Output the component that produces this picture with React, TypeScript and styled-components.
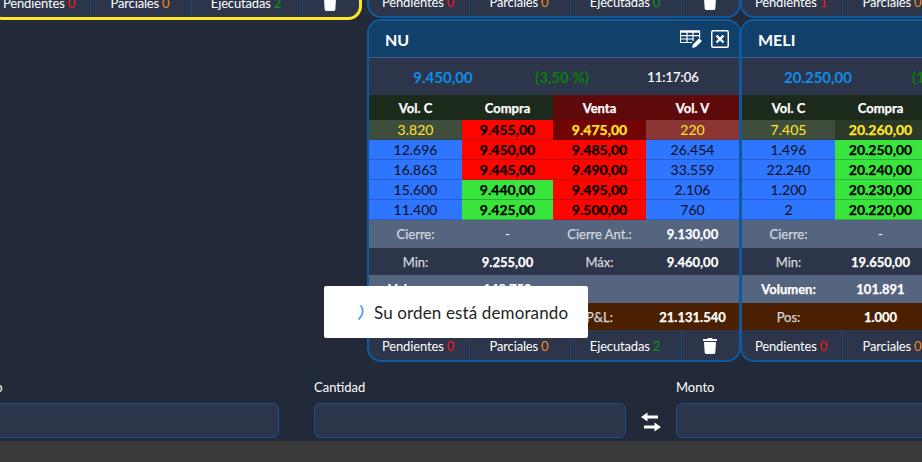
import React from "react";
import styled, { createGlobalStyle } from "styled-components";
import { FaTrash } from "react-icons/fa";

const Global = createGlobalStyle`
  html, body { margin: 0; padding: 0; background: #222938; overflow: hidden; }
  * { box-sizing: border-box; }
`;

const Page = styled.div`
  position: relative;
  width: 922px;
  height: 462px;
  overflow: hidden;
  background: #222938;
  color: #fff;
  font-family: Lato, "Open Sans", sans-serif;
  font-size: 13px;
  display: flex;
  flex-direction: column;
`;

const Board = styled.div`
  margin: -20px 0 0 -12px;
  height: 382px;
  flex: none;
`;

const TopRow = styled.div`
  display: flex;
  height: 38px;
  margin-bottom: 1px;
  align-items: flex-start;
`;

const MainRow = styled.div`
  display: flex;
  padding-left: 379px;
`;

const Card = styled.section<{ $active?: boolean; $strip?: boolean; $joined?: boolean }>`
  flex: none;
  width: 374px;
  margin-right: ${(p) => (p.$active ? "5px" : "0")};
  margin-left: ${(p) => (p.$joined ? "-1px" : "0")};
  border: ${(p) => (p.$active ? "3px solid #ffe629" : "2px solid #0f5a9e")};
  border-left-width: 2px;
  border-right-width: ${(p) => (p.$active ? "3px" : "2px")};
  border-radius: ${(p) => (p.$strip ? "0 0 14px 14px" : "14px")};
  background: #2c3549;
  overflow: hidden;
  display: flex;
  flex-direction: column;
  ${(p) => p.$strip && "height: " + (p.$active ? "40px" : "38px") + "; justify-content: flex-end; border-top: 0;"}
`;

const Header = styled.header`
  height: 37px;
  flex: none;
  background: #11406a;
  border-bottom: 1px solid #3c5f86;
  display: flex;
  align-items: center;
  justify-content: space-between;
  padding: 0 10px 0 16px;
  font-size: 16px;
  font-weight: 700;
`;

const HeaderIcons = styled.div`
  display: flex;
  align-items: center;
  gap: 9px;
`;

const Info = styled.div<{ $wide?: boolean }>`
  height: 37px;
  flex: none;
  display: grid;
  grid-template-columns: ${(p) => (p.$wide ? "152px 90px 1fr" : "148px 90px 1fr")};
  align-items: center;
  text-align: center;
  white-space: nowrap;
`;

const Price = styled.span`
  color: #0f8ee9;
  font-size: 15px;
  font-weight: 700;
`;

const Change = styled.span`
  color: #0b7d0b;
  font-size: 15px;
  font-weight: 700;
`;

const Clock = styled.span`
  font-size: 13px;
  -webkit-text-stroke: 0.2px #fff;
`;

const Grid4 = styled.div<{ $bg?: string; $h: number }>`
  display: grid;
  grid-template-columns: 93px 91px 93px 93px;
  height: ${(p) => p.$h}px;
  flex: none;
  background: ${(p) => p.$bg || "transparent"};
`;

const Cell = styled.div<{ $bg?: string; $color?: string; $bold?: boolean; $line?: boolean; $dim?: boolean }>`
  display: flex;
  align-items: center;
  justify-content: center;
  white-space: nowrap;
  background: ${(p) => p.$bg || "transparent"};
  color: ${(p) => p.$color || (p.$dim ? "#d3d7de" : "#fff")};
  font-weight: ${(p) => (p.$bold ? 700 : 400)};
  font-size: ${(p) => (p.$line ? "14px" : "13px")};
  ${(p) => p.$bold && "-webkit-text-stroke: 0.25px currentColor;"}
  ${(p) => p.$dim && "-webkit-text-stroke: 0.25px currentColor;"}
  ${(p) => p.$line && "border-bottom: 1px solid rgba(20,40,90,.28);"}
`;

const Footer = styled.footer`
  height: 30px;
  flex: none;
  display: grid;
  grid-template-columns: 101px 101px 111px 1fr;
`;

const FootCell = styled.div`
  display: flex;
  align-items: center;
  justify-content: center;
  gap: 3px;
  padding: 1px 2px 0 0;
  white-space: nowrap;
  font-size: 13px;
  letter-spacing: -0.15px;
  border-right: 1px solid #17497f;
  &:last-child { border-right: 0; }
`;

const Count = styled.span<{ $color: string }>`
  color: ${(p) => p.$color};
`;

const Form = styled.form`
  flex: none;
  display: flex;
  align-items: flex-end;
  margin-left: -33px;
  margin-top: 18px;
`;

const Field = styled.label`
  flex: none;
  width: 312px;
  display: flex;
  flex-direction: column;
  gap: 9px;
  font-size: 13px;
  line-height: 14px;
`;

const FieldGap = styled.div`
  flex: none;
  width: 35px;
`;

const Input = styled.input`
  height: 35px;
  width: 100%;
  border: 1px solid #1a4f94;
  border-radius: 6px;
  background: #2c3549;
  outline: none;
`;

const Swap = styled.div`
  flex: none;
  width: 50px;
  height: 35px;
  padding: 3px 0 0 0;
  display: flex;
  align-items: center;
  justify-content: center;
`;

const BottomBar = styled.div`
  flex: none;
  height: 21px;
  margin-top: 3px;
  background: #3a3a3a;
`;

const Toast = styled.div`
  position: absolute;
  left: 324px;
  top: 286px;
  width: 264px;
  height: 52px;
  background: #fff;
  border-radius: 2px;
  display: flex;
  align-items: center;
  padding-left: 34px;
  gap: 10px;
  color: #1f1f1f;
  font-size: 17px;
  letter-spacing: 0.13px;
`;

const R = "#ff0500";
const G = "#39e53d";
const B = "#2e75ff";
const INK = "#0b1020";

type Row = [string, string, string, string, string, string];

const TableIcon = () => (
  <svg width="22" height="18" viewBox="0 0 22 18" fill="none" stroke="#fff" strokeWidth="1.2">
    <path d="M12 12.5H1a.6.6 0 0 1-.6-.6V1.2h19.2V8" />
    <path d="M.5 1.6h19" strokeWidth="2.2" />
    <path d="M.5 5.6h19M.5 9h13M7 2v10M13 2v9" />
    <path d="M12 18l1.100-3.800 6-6 2.800 2.800-6 6z" fill="#fff" stroke="none" />
  </svg>
);

const CloseIcon = () => (
  <svg width="18" height="18" viewBox="0 0 18 18" fill="none" stroke="#fff">
    <rect x="0.75" y="0.75" width="16.5" height="16.5" rx="1.5" strokeWidth="1.5" />
    <path d="M5.5 5.5l7 7M12.5 5.5l-7 7" strokeWidth="2.4" />
  </svg>
);

const SwapIcon = () => (
  <svg width="20" height="20" viewBox="0 0 20 20" fill="#fff">
    <path d="M0 5L6.500 0.500v3h10.500v3H6.500v3z" />
    <path d="M20 15l-6.500 4.500v-3H3v-3h10.500v-3z" />
  </svg>
);

const Spinner = () => (
  <svg width="6" height="15" viewBox="0 0 6 15" fill="none">
    <path d="M3 1C5.500 4 5.500 10 1 14" stroke="#4aa3f5" strokeWidth="1.800" strokeLinecap="round" />
  </svg>
);

const Foot = ({ p, pa, e }: { p: string; pa: string; e: string }) => (
  <Footer>
    <FootCell>Pendientes <Count $color="#ff1414">{p}</Count></FootCell>
    <FootCell>Parciales <Count $color="#f08a1d">{pa}</Count></FootCell>
    <FootCell>Ejecutadas <Count $color="#0b9a0b">{e}</Count></FootCell>
    <FootCell><FaTrash size={16} color="#fff" /></FootCell>
  </Footer>
);

const rowBg = (c: string, bg?: string, color?: string, bold?: boolean) => (
  <Cell $bg={bg} $color={color} $bold={bold} $line>{c}</Cell>
);

const Quote = ({
  name, price, change, time, first, rows, stats, foot, joined,
}: {
  name: string; price: string; change: string; time?: string; joined?: boolean;
  first: { a: string; b: string; bBg: string; c: string; cBg: string; d: string };
  rows: Row[];
  stats: [string, string, string, string][];
  foot: { p: string; pa: string; e: string };
}) => (
  <Card $joined={joined}>
    <Header>
      {name}
      <HeaderIcons><TableIcon /><CloseIcon /></HeaderIcons>
    </Header>
    <Info $wide={joined}>
      <Price>{price}</Price>
      <Change>{change}</Change>
      <Clock>{time}</Clock>
    </Info>
    <Grid4 $h={25}>
      <Cell $bg="#1c2a1c" $bold>Vol. C</Cell>
      <Cell $bg="#1c2a1c" $bold>Compra</Cell>
      <Cell $bg="#5f0a0a" $bold>Venta</Cell>
      <Cell $bg="#5f0a0a" $bold>Vol. V</Cell>
    </Grid4>
    <Grid4 $h={20}>
      {rowBg(first.a, "#3f4d3c", "#ffe629")}
      {rowBg(first.b, first.bBg, first.bBg === R ? "#000" : "#ffe629", true)}
      {rowBg(first.c, first.cBg, "#ffe629", true)}
      {rowBg(first.d, "#8b3535", "#ffe629")}
    </Grid4>
    {rows.map((r) => (
      <Grid4 $h={20} key={r[0] + r[1]}>
        {rowBg(r[0], B, INK)}
        {rowBg(r[1], r[4], "#000", true)}
        {rowBg(r[2], r[5], "#000", true)}
        {rowBg(r[3], B, INK)}
      </Grid4>
    ))}
    {stats.map((s, i) => {
      const last = i === 3;
      const bg = last ? "#4a2000" : i % 2 === 0 ? "#56657f" : "#2c3549";
      const boldLabel = i === 2;
      return (
        <Grid4 $h={i % 2 === 0 ? 28 : 27} $bg={bg} key={i}>
          <Cell $dim={!boldLabel} $bold={boldLabel}>{s[0]}</Cell>
          <Cell $bold={s[1] !== "-"}>{s[1]}</Cell>
          <Cell $dim>{s[2]}</Cell>
          <Cell $bold>{s[3]}</Cell>
        </Grid4>
      );
    })}
    <Foot {...foot} />
  </Card>
);

export default function App() {
  return (
    <Page>
      <Global />
      <Board>
        <TopRow>
          <Card $strip $active><Foot p="0" pa="0" e="2" /></Card>
          <Card $strip><Foot p="0" pa="0" e="0" /></Card>
          <Card $strip $joined><Foot p="1" pa="0" e="0" /></Card>
        </TopRow>
        <MainRow>
          <Quote
            name="NU"
            price="9.450,00"
            change="(3,50 %)"
            time="11:17:06"
            first={{ a: "3.820", b: "9.455,00", bBg: R, c: "9.475,00", cBg: "#730404", d: "220" }}
            rows={[
              ["12.696", "9.450,00", "9.485,00", "26.454", R, R],
              ["16.863", "9.445,00", "9.490,00", "33.559", R, R],
              ["15.600", "9.440,00", "9.495,00", "2.106", G, R],
              ["11.400", "9.425,00", "9.500,00", "760", G, R],
            ]}
            stats={[
              ["Cierre:", "-", "Cierre Ant.:", "9.130,00"],
              ["Min:", "9.255,00", "Máx:", "9.460,00"],
              ["Volumen:", "148.750", "", ""],
              ["Pos:", "2.220", "P&L:", "21.131.540"],
            ]}
            foot={{ p: "0", pa: "0", e: "2" }}
          />
          <Quote
            joined
            name="MELI"
            price="20.250,00"
            change="(1,50 %)"
            time="11:17:06"
            first={{ a: "7.405", b: "20.260,00", bBg: "#2b3a28", c: "20.270,00", cBg: "#730404", d: "100" }}
            rows={[
              ["1.496", "20.250,00", "20.280,00", "300", G, R],
              ["22.240", "20.240,00", "20.290,00", "500", G, R],
              ["1.200", "20.230,00", "20.300,00", "800", G, R],
              ["2", "20.220,00", "20.310,00", "900", G, R],
            ]}
            stats={[
              ["Cierre:", "-", "Cierre Ant.:", "19.950,00"],
              ["Min:", "19.650,00", "Máx:", "20.300,00"],
              ["Volumen:", "101.891", "", ""],
              ["Pos:", "1.000", "P&L:", "300.000"],
            ]}
            foot={{ p: "0", pa: "0", e: "0" }}
          />
        </MainRow>
      </Board>
      <Form>
        <Field>Precio<Input /></Field>
        <FieldGap />
        <Field>Cantidad<Input /></Field>
        <Swap><SwapIcon /></Swap>
        <Field>Monto<Input /></Field>
      </Form>
      <BottomBar />
      <Toast><Spinner /><span>Su orden está demorando</span></Toast>
    </Page>
  );
}
